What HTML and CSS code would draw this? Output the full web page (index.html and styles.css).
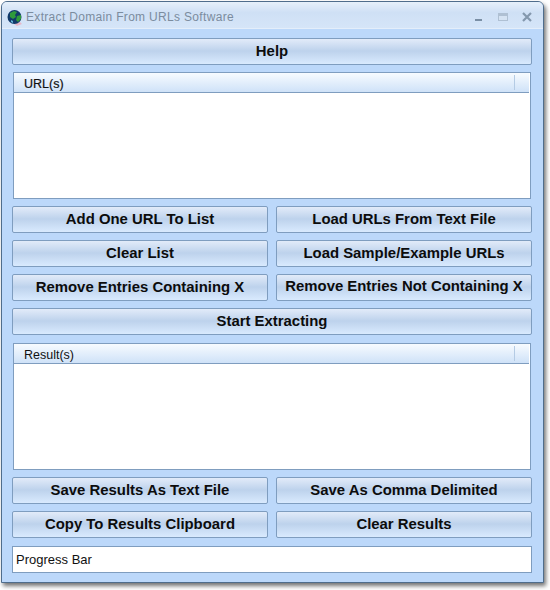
FILE: index.html
```html
<!DOCTYPE html>
<html lang="en">
<head>
    <meta charset="UTF-8">
    <title>Extract Domain From URLs Software</title>
    <link rel="stylesheet" href="styles.css">
</head>
<body>

    <div class="window">
        <div class="titlebar">
            <svg class="app-icon" width="16" height="17" viewBox="0 0 16 17">
                <path d="M7 15 L13 13 L15 15 L10 17 Z" fill="#e8b8c8"/>
                <circle cx="7.5" cy="8" r="7" fill="#123a6a"/>
                <path d="M3 4 L7 2 L10 3 L8 6 L9 8 L6 10 L3 8 Z" fill="#2f9a3c"/>
                <path d="M10 7 L14 6 L14 10 L11 13 L9 11 Z" fill="#2f9a3c"/>
                <path d="M4 11 L6 12 L6 14 L4 13 Z" fill="#63b5d8"/>
            </svg>
            <span class="title">Extract Domain From URLs Software</span>
            <div class="controls">
                <svg width="10" height="10" viewBox="0 0 10 10"><rect x="1" y="7" width="7" height="2" fill="#7a8fa5"/></svg>
                <svg width="10" height="10" viewBox="0 0 10 10"><rect x="0.5" y="1.5" width="9" height="7" fill="#d5e3f3" stroke="#afc0d3"/><rect x="1" y="2" width="8" height="2" fill="#afc0d3"/></svg>
                <svg width="10" height="10" viewBox="0 0 10 10"><path d="M1 1 L9 9 M9 1 L1 9" stroke="#8498ad" stroke-width="2.2"/></svg>
            </div>
        </div>

        <div class="content">
            <button class="btn">Help</button>

            <div class="list url-list">
                <div class="list-head"><span class="col">URL(s)</span><span class="col-end"></span></div>
            </div>

            <div class="btn-grid">
                <button class="btn">Add One URL To List</button>
                <button class="btn">Load URLs From Text File</button>
                <button class="btn">Clear List</button>
                <button class="btn">Load Sample/Example URLs</button>
                <button class="btn">Remove Entries Containing X</button>
                <button class="btn raised">Remove Entries Not Containing X</button>
            </div>

            <button class="btn start">Start Extracting</button>

            <div class="list result-list">
                <div class="list-head"><span class="col small">Result(s)</span><span class="col-end"></span></div>
            </div>

            <div class="btn-grid">
                <button class="btn">Save Results As Text File</button>
                <button class="btn">Save As Comma Delimited</button>
                <button class="btn">Copy To Results Clipboard</button>
                <button class="btn">Clear Results</button>
            </div>

            <div class="progress">Progress Bar</div>
        </div>
    </div>

</body>
</html>
```

FILE: styles.css
```css
body {
    margin: 0;
    width: 550px;
    height: 590px;
    background: #fff;
    font-family: "Liberation Sans", Arial, sans-serif;
    overflow: hidden;
}

.window {
    width: 543px;
    height: 582px;
    margin: 1px 0 0 1px;
    box-sizing: border-box;
    border: 1px solid #4f6d8c;
    border-radius: 6px 6px 0 0;
    background: #bcd8fa;
    box-shadow: 2px 3px 4px rgba(0, 0, 0, 0.55);
    display: flex;
    flex-direction: column;
}

.titlebar {
    height: 27px;
    box-sizing: border-box;
    padding: 4px 11px 0 5px;
    display: flex;
    align-items: center;
    background: linear-gradient(#e6f0fb, #cfe0f5 40%, #d5e5f8);
    border-bottom: 1px solid #e4eefa;
    border-radius: 5px 5px 0 0;
}

.app-icon {
    margin-right: 3px;
}

.title {
    font-size: 12px;
    letter-spacing: 0.32px;
    color: #7b8c9e;
}

.controls {
    margin-left: auto;
    display: flex;
    gap: 14px;
}

.content {
    padding: 9px 11px 0 10px;
    display: flex;
    flex-direction: column;
}

.btn {
    height: 27px;
    width: 100%;
    padding: 0 0 2px;
    border: 1px solid #7f9dbf;
    border-radius: 2px;
    background: linear-gradient(#e2ebf9, #bdd2ec 48%, #d9eafe);
    font-family: "Liberation Sans", Arial, sans-serif;
    font-size: 14.9px;
    font-weight: bold;
    color: #0c0c0c;
}

.btn.raised {
    padding-bottom: 4px;
}

.btn-grid {
    display: grid;
    grid-template-columns: 256px 256px;
    gap: 7px 8px;
}

.start {
    margin-top: 7px;
}

.list {
    width: 518px;
    background: #fff;
    border: 1px solid #7f9dbf;
    box-sizing: border-box;
}

.url-list {
    height: 127px;
    margin: 7px 0 7px 1px;
}

.result-list {
    height: 127px;
    margin: 8px 0 7px 1px;
}

.list-head {
    height: 20px;
    margin-right: 1px;
    box-sizing: border-box;
    display: flex;
    background: linear-gradient(#f7fbff, #cfe2f8);
    border-bottom: 1px solid #7f9dbf;
}

.col {
    flex: 1;
    padding: 4px 0 0 10px;
    font-size: 12.5px;
    color: #111;
    -webkit-text-stroke: 0.2px #111;
}

.col.small {
    -webkit-text-stroke: 0;
}

.col-end {
    width: 14px;
    margin: 2px 0;
    border-left: 1px solid #b4cbe4;
}

.progress {
    margin-top: 8px;
    height: 27px;
    box-sizing: border-box;
    padding-left: 3px;
    display: flex;
    align-items: center;
    background: #fff;
    border: 1px solid #7f9dbf;
    font-size: 13px;
    color: #111;
}
```
